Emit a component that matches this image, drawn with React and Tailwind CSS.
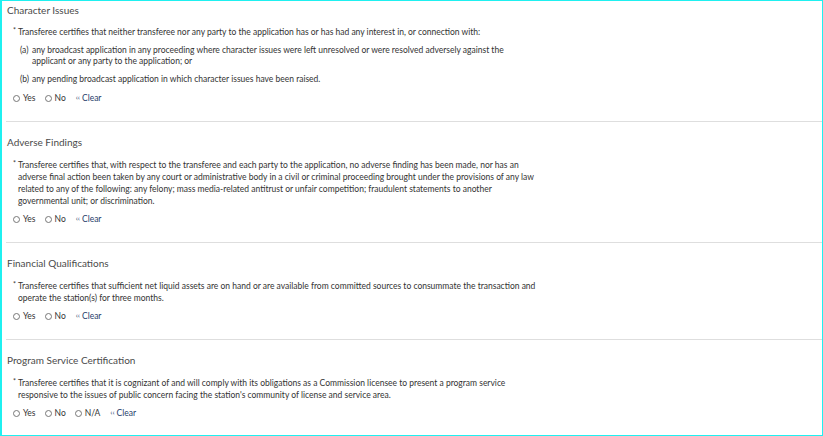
import React from 'react';

const sections = [
    {
        title: "Character Issues",
        lines: ["Transferee certifies that neither transferee nor any party to the application has or has had any interest in, or connection with:"],
        items: [
            {label: "(a)", lines: ["any broadcast application in any proceeding where character issues were left unresolved or were resolved adversely against the", "applicant or any party to the application; or"]},
            {label: "(b)", lines: ["any pending broadcast application in which character issues have been raised."]},
        ],
        options: ["Yes", "No"],
    },
    {
        title: "Adverse Findings",
        lines: [
            "Transferee certifies that, with respect to the transferee and each party to the application, no adverse finding has been made, nor has an",
            "adverse final action been taken by any court or administrative body in a civil or criminal proceeding brought under the provisions of any law",
            "related to any of the following: any felony; mass media-related antitrust or unfair competition; fraudulent statements to another",
            "governmental unit; or discrimination.",
        ],
        options: ["Yes", "No"],
    },
    {
        title: "Financial Qualifications",
        lines: [
            "Transferee certifies that sufficient net liquid assets are on hand or are available from committed sources to consummate the transaction and",
            "operate the station(s) for three months.",
        ],
        options: ["Yes", "No"],
    },
    {
        title: "Program Service Certification",
        lines: [
            "Transferee certifies that it is cognizant of and will comply with its obligations as a Commission licensee to present a program service",
            "responsive to the issues of public concern facing the station's community of license and service area.",
        ],
        options: ["Yes", "No", "N/A"],
    },
];

function RadioRow({options}) {
    return (
        <div className="flex items-center h-[14px] pl-[7px] text-[8.5px] text-[#333]">
            {options.map((opt) => (
                <label key={opt} className="flex items-center mr-[9px]">
                    <span className="w-[7px] h-[7px] rounded-full border border-[#777] mr-[3px]"></span>
                    <span>{opt}</span>
                </label>
            ))}
            <span className="flex items-center text-[#1f3d6b] ml-[1px]">
                <span className="text-[7.5px] mr-[2px] leading-none">‹‹</span>
                <span>Clear</span>
            </span>
        </div>
    );
}

function Section({section, first}) {
    return (
        <div className={(first ? "pt-[2px] " : "pt-[13px] ") + "pb-[16px] border-b border-[#dedede]"}>
            <div className="h-[14px] leading-[14px] text-[10px] text-[#4a4a4a] pl-[1px]">{section.title}</div>
            <div className={(first ? "mt-[9px] " : "mt-[10px] ") + "pl-[7px] text-[8.5px] leading-[12px] text-[#333]"}>
                <div className="relative pl-[5px]">
                    <span className="absolute left-0 top-[-2px] text-[7px]">*</span>
                    {section.lines.map((line, i) => (
                        <div key={i}>{line}</div>
                    ))}
                </div>
            </div>
            {section.items && section.items.map((item) => (
                <div key={item.label} className="mt-[7px] flex pl-[14px] text-[8.5px] leading-[11px] text-[#333]">
                    <span className="w-[12px] shrink-0">{item.label}</span>
                    <div>
                        {item.lines.map((line, i) => (
                            <div key={i}>{line}</div>
                        ))}
                    </div>
                </div>
            ))}
            <div className={first ? "mt-[6px]" : "mt-[5px]"}>
                <RadioRow options={section.options}/>
            </div>
        </div>
    );
}

export default function App() {
    return (
        <div className="w-[823px] h-[436px] bg-white border border-l-2 border-[#1ff0f0] overflow-hidden" style={{fontFamily: "Lato, 'Open Sans', sans-serif"}}>
            <div className="ml-[4px]">
                {sections.map((s, i) => (
                    <Section key={s.title} section={s} first={i === 0}/>
                ))}
            </div>
        </div>
    );
}
